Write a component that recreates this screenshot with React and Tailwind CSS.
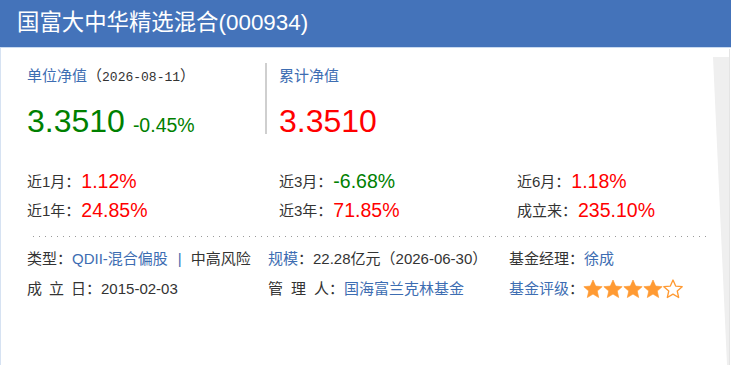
import React from "react";

const F = { fontFamily: '"Liberation Sans","Noto Sans CJK SC",sans-serif' };

function Star({ filled }) {
  return (
    <svg width="20" height="20" viewBox="0 0 24 24" className="block">
      <polygon
        points="12,1.2 15.2,8.5 23,9.2 17.1,14.4 18.8,22.2 12,18.1 5.2,22.2 6.9,14.4 1,9.2 8.8,8.5"
        fill={filled ? "#ff9a33" : "#fff"}
        stroke="#ff9a33"
        strokeWidth={filled ? 0.8 : 1.6}
        strokeLinejoin="round"
      />
    </svg>
  );
}

function Ret({ label, value, color, w }) {
  return (
    <div className={`flex items-center ${w}`}>
      <span className="text-[15px] text-[#333]">{label}</span>
      <span className={`ml-[1px] text-[19.5px] ${color}`}>{value}</span>
    </div>
  );
}

export default function App() {
  return (
    <div className="relative w-[731px] h-[365px] bg-white overflow-hidden" style={F}>
      <div className="h-[48px] bg-[#4473ba] flex items-center pl-[17px] border-b border-[#c9daf0]">
        <span className="text-white text-[22.4px] leading-none">国富大中华精选混合(000934)</span>
      </div>
      <div className="h-[317px] border-l border-[#d6e2f2] pl-[26px] relative">
        {/* NAV */}
        <div className="flex pt-[15px]">
          <div className="w-[238px] h-[72px] flex flex-col">
            <div className="h-[20px] mt-[3px] flex items-center text-[15px]">
              <span className="text-[#3d6db2]">单位净值</span>
              <span className="text-[#333]">（<span className="text-[13px]" style={{ fontFamily: '"Liberation Mono",monospace' }}>2026-08-11</span>）</span>
            </div>
            <div className="flex items-baseline mt-[17px] text-[#008000]">
              <span className="text-[32px] leading-[36px]">3.3510</span>
              <span className="text-[19.5px] ml-[8px]">-0.45%</span>
            </div>
          </div>
          <div className="w-[2px] h-[71px] bg-[#cfcfcf]" />
          <div className="pl-[12px] flex flex-col">
            <div className="h-[20px] mt-[3px] flex items-center text-[15px] text-[#3d6db2]">累计净值</div>
            <div className="mt-[17px] text-[32px] leading-[36px] text-[#ff0000]">3.3510</div>
          </div>
        </div>
        {/* returns */}
        <div className="mt-[32px] flex flex-col gap-[7px]">
          <div className="flex h-[22px]">
            <Ret w="w-[252px]" label="近1月：" value="1.12%" color="text-[#ff0000]" />
            <Ret w="w-[238px]" label="近3月：" value="-6.68%" color="text-[#008000]" />
            <Ret w="" label="近6月：" value="1.18%" color="text-[#ff0000]" />
          </div>
          <div className="flex h-[22px]">
            <Ret w="w-[252px]" label="近1年：" value="24.85%" color="text-[#ff0000]" />
            <Ret w="w-[238px]" label="近3年：" value="71.85%" color="text-[#ff0000]" />
            <Ret w="" label="成立来：" value="235.10%" color="text-[#ff0000]" />
          </div>
        </div>
        <div className="ml-[6px] mt-[14px] w-[676px] h-[1px] bg-[linear-gradient(to_right,#9a9a9a_1px,transparent_1px)] bg-[length:6px_1px]" />
        {/* info */}
        <div className="mt-[12px] flex flex-col gap-[10px] text-[15px] text-[#333]">
          <div className="flex h-[20px] items-center">
            <div className="w-[241px] flex items-center">
              <span>类型：</span>
              <span className="text-[#3d6db2]">QDII-混合偏股</span>
              <span className="text-[#3d6db2] ml-[10px] mr-[9px]">|</span>
              <span>中高风险</span>
            </div>
            <div className="w-[241px] flex items-center">
              <span className="text-[#3d6db2]">规模</span>
              <span>：22.28亿元（2026-06-30）</span>
            </div>
            <div className="flex items-center">
              <span>基金经理：</span>
              <span className="text-[#3d6db2]">徐成</span>
            </div>
          </div>
          <div className="flex h-[20px] items-center">
            <div className="w-[241px] flex items-center">
              <span className="tracking-[7px]">成立</span>
              <span>日：2015-02-03</span>
            </div>
            <div className="w-[241px] flex items-center">
              <span className="tracking-[8px]">管理</span>
              <span>人：</span>
              <span className="text-[#3d6db2]">国海富兰克林基金</span>
            </div>
            <div className="flex items-center">
              <span className="text-[#3d6db2]">基金评级</span>
              <span>：</span>
              <div className="flex -ml-[1px]">
                <Star filled />
                <Star filled />
                <Star filled />
                <Star filled />
                <Star />
              </div>
            </div>
          </div>
        </div>
      </div>
      <svg className="absolute left-0 top-0 pointer-events-none" width="731" height="365">
        <polygon points="713,57 729,57 729,365 727,365" fill="#efefef" />
        <line x1="729.5" y1="49" x2="729.5" y2="365" stroke="#e4e4e4" />
      </svg>
    </div>
  );
}
